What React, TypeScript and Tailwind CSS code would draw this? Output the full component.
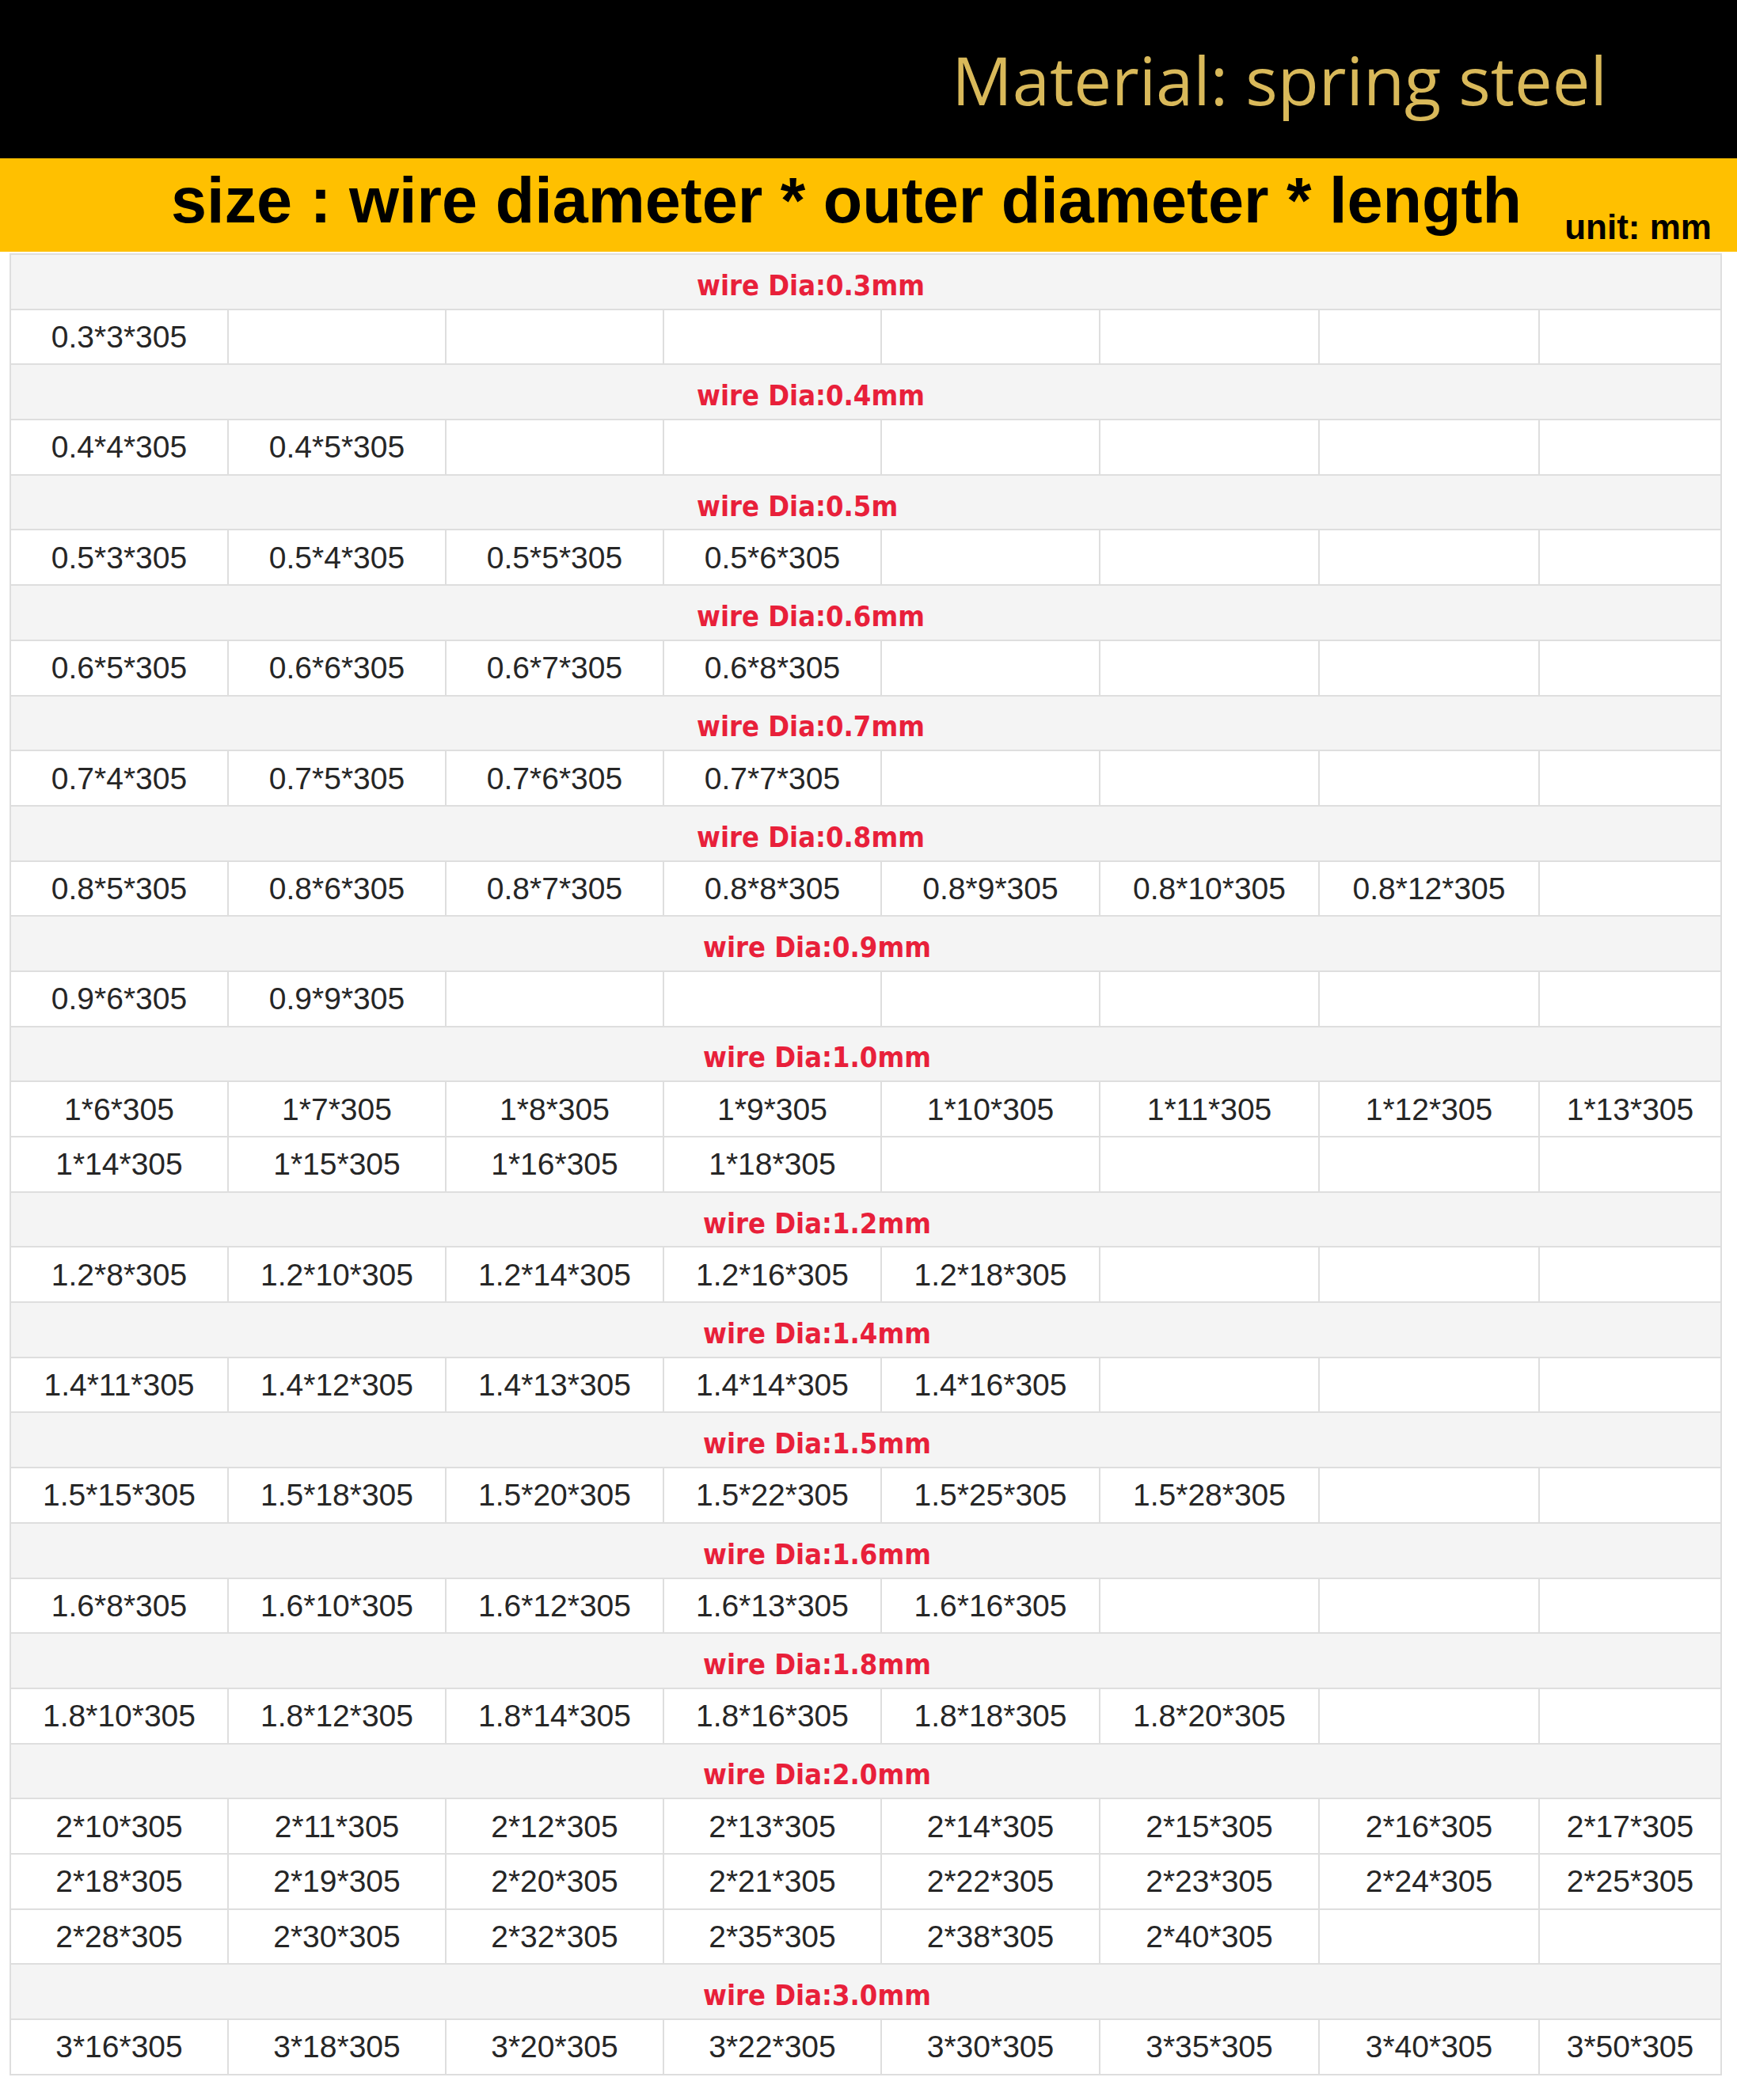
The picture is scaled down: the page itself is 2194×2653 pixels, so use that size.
const ROW_H = "h-[69.7px]";

type Section = { label: string; rows: string[][]; shift?: boolean };

const SECTIONS: Section[] = [
  { label: "wire Dia:0.3mm", rows: [["0.3*3*305"]] },
  { label: "wire Dia:0.4mm", rows: [["0.4*4*305", "0.4*5*305"]] },
  { label: "wire Dia:0.5m", rows: [["0.5*3*305", "0.5*4*305", "0.5*5*305", "0.5*6*305"]] },
  { label: "wire Dia:0.6mm", rows: [["0.6*5*305", "0.6*6*305", "0.6*7*305", "0.6*8*305"]] },
  { label: "wire Dia:0.7mm", rows: [["0.7*4*305", "0.7*5*305", "0.7*6*305", "0.7*7*305"]] },
  {
    label: "wire Dia:0.8mm",
    rows: [["0.8*5*305", "0.8*6*305", "0.8*7*305", "0.8*8*305", "0.8*9*305", "0.8*10*305", "0.8*12*305"]],
  },
  { label: "wire Dia:0.9mm", shift: true, rows: [["0.9*6*305", "0.9*9*305"]] },
  {
    label: "wire Dia:1.0mm",
    shift: true,
    rows: [
      ["1*6*305", "1*7*305", "1*8*305", "1*9*305", "1*10*305", "1*11*305", "1*12*305", "1*13*305"],
      ["1*14*305", "1*15*305", "1*16*305", "1*18*305"],
    ],
  },
  {
    label: "wire Dia:1.2mm",
    shift: true,
    rows: [["1.2*8*305", "1.2*10*305", "1.2*14*305", "1.2*16*305", "1.2*18*305"]],
  },
  {
    label: "wire Dia:1.4mm",
    shift: true,
    rows: [["1.4*11*305", "1.4*12*305", "1.4*13*305", "1.4*14*305", "1.4*16*305"]],
  },
  {
    label: "wire Dia:1.5mm",
    shift: true,
    rows: [["1.5*15*305", "1.5*18*305", "1.5*20*305", "1.5*22*305", "1.5*25*305", "1.5*28*305"]],
  },
  {
    label: "wire Dia:1.6mm",
    shift: true,
    rows: [["1.6*8*305", "1.6*10*305", "1.6*12*305", "1.6*13*305", "1.6*16*305"]],
  },
  {
    label: "wire Dia:1.8mm",
    shift: true,
    rows: [["1.8*10*305", "1.8*12*305", "1.8*14*305", "1.8*16*305", "1.8*18*305", "1.8*20*305"]],
  },
  {
    label: "wire Dia:2.0mm",
    shift: true,
    rows: [
      ["2*10*305", "2*11*305", "2*12*305", "2*13*305", "2*14*305", "2*15*305", "2*16*305", "2*17*305"],
      ["2*18*305", "2*19*305", "2*20*305", "2*21*305", "2*22*305", "2*23*305", "2*24*305", "2*25*305"],
      ["2*28*305", "2*30*305", "2*32*305", "2*35*305", "2*38*305", "2*40*305"],
    ],
  },
  {
    label: "wire Dia:3.0mm",
    shift: true,
    rows: [["3*16*305", "3*18*305", "3*20*305", "3*22*305", "3*30*305", "3*35*305", "3*40*305", "3*50*305"]],
  },
];

// ── section header (grey band, red label) ──
function HeaderRow({ label, shift }: { label: string; shift?: boolean }) {
  return (
    <div
      className={`${ROW_H} flex items-center pt-[10px] bg-[#f4f4f4] border-b-2 border-r-2 border-[#dedede] ${
        shift ? "pl-[874px]" : "pl-[866px]"
      }`}
    >
      <span
        className="text-[36px] leading-none font-bold text-[#e8203a]"
        style={{ fontFamily: "'DejaVu Sans Condensed', 'DejaVu Sans', Verdana, sans-serif" }}
      >
        {label}
      </span>
    </div>
  );
}

// ── data row, always 8 cells ──
function DataRow({ cells }: { cells: string[] }) {
  const padded = Array.from({ length: 8 }, (_, i) => cells[i] ?? "");
  return (
    <div className={`${ROW_H} grid grid-cols-[275px_275px_275px_275px_276px_277px_278px_1fr] bg-white`}>
      {padded.map((c, i) => (
        <div
          key={i}
          className="flex items-center justify-center border-b-2 border-r-2 border-[#dedede] text-[39px] leading-none text-[#262626]"
        >
          {c}
        </div>
      ))}
    </div>
  );
}

export default function App() {
  return (
    <div
      className="w-[2194px] min-h-[2653px] bg-white"
      style={{ fontFamily: "'Liberation Sans', Arial, sans-serif" }}
    >
      {/* ── black title band ── */}
      <div className="h-[200px] bg-black flex justify-end items-start pr-[164px] pt-[58px]">
        <span
          className="text-[85px] leading-none text-[#d9b95a]"
          style={{ fontFamily: "'Open Sans', sans-serif" }}
        >
          Material: spring steel
        </span>
      </div>

      {/* ── yellow size band ── */}
      <div className="h-[118px] bg-[#ffc000] flex items-start">
        <span className="pl-[216px] pt-[13px] text-[81px] leading-none font-bold text-black whitespace-nowrap">
          size : wire diameter * outer diameter * length
        </span>
        <span className="ml-auto pr-[32px] pt-[65px] text-[44px] leading-none font-bold text-black whitespace-nowrap">
          unit: mm
        </span>
      </div>

      {/* ── size table ── */}
      <div className="ml-[12px] mt-[2px] w-[2163px] border-l-2 border-t-2 border-[#dedede]">
        {SECTIONS.map((s) => (
          <div key={s.label}>
            <HeaderRow label={s.label} shift={s.shift} />
            {s.rows.map((r, i) => (
              <DataRow key={i} cells={r} />
            ))}
          </div>
        ))}
      </div>
    </div>
  );
}
